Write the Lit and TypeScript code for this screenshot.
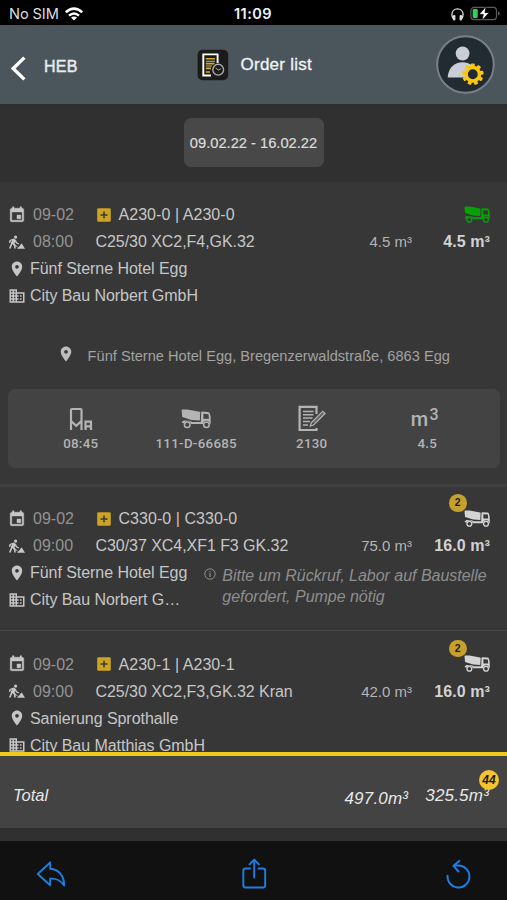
import { LitElement, html, svg, css, nothing } from "lit";
import { customElement, property } from "lit/decorators.js";

interface Order {
  date: string;
  time: string;
  code: string;
  product: string;
  ordered: string;
  delivered: string;
  site: string;
  customer: string;
  badge?: string;
  note?: string;
  active?: boolean;
  kind: string;
}

const ORDERS: Order[] = [
  {
    date: "09-02", time: "08:00", code: "A230-0 | A230-0", product: "C25/30 XC2,F4,GK.32",
    ordered: "4.5 m³", delivered: "4.5 m³", site: "Fünf Sterne Hotel Egg",
    customer: "City Bau Norbert GmbH", active: true, kind: "first",
  },
  {
    date: "09-02", time: "09:00", code: "C330-0 | C330-0", product: "C30/37 XC4,XF1 F3 GK.32",
    ordered: "75.0 m³", delivered: "16.0 m³", site: "Fünf Sterne Hotel Egg",
    customer: "City Bau Norbert G…", badge: "2",
    note: "Bitte um Rückruf, Labor auf Baustelle gefordert, Pumpe nötig", kind: "second",
  },
  {
    date: "09-02", time: "09:00", code: "A230-1 | A230-1", product: "C25/30 XC2,F3,GK.32 Kran",
    ordered: "42.0 m³", delivered: "16.0 m³", site: "Sanierung Sprothalle",
    customer: "City Bau Matthias GmbH", badge: "2", kind: "third",
  },
];

const calendar = html`<svg class="ic" viewBox="0 0 24 24"><path d="M17 12h-5v5h5v-5zM16 1v2H8V1H6v2H5c-1.11 0-1.99.9-1.99 2L3 19c0 1.1.89 2 2 2h14c1.1 0 2-.9 2-2V5c0-1.1-.9-2-2-2h-1V1h-2zm3 18H5V8h14v11z" stroke="currentColor" stroke-width=".6"/></svg>`;
const pin = html`<svg class="ic" viewBox="0 0 24 24"><path d="M12 2C8.130 2 5 5.130 5 9c0 5.250 7 13 7 13s7-7.750 7-13c0-3.870-3.130-7-7-7zm0 9.500c-1.380 0-2.500-1.120-2.500-2.500s1.120-2.500 2.500-2.500 2.500 1.120 2.500 2.500-1.120 2.500-2.500 2.500z"/></svg>`;
const building = html`<svg class="ic" viewBox="0 0 24 24"><path d="M12 7V3H2v18h20V7H12zM6 19H4v-2h2v2zm0-4H4v-2h2v2zm0-4H4V9h2v2zm0-4H4V5h2v2zm4 12H8v-2h2v2zm0-4H8v-2h2v2zm0-4H8V9h2v2zm0-4H8V5h2v2zm10 12h-8v-2h2v-2h-2v-2h2v-2h-2V9h8v10zm-2-8h-2v2h2v-2zm0 4h-2v2h2v-2z"/></svg>`;
const digger = html`<svg class="ic" viewBox="0 0 18 18">
  <circle cx="7.600" cy="4.100" r="1.600"/>
  <path d="M5.600 5.400 8.400 7.200 6.500 10 7.700 12.200V15.600H6.100V12.900L4.400 11 2.700 15.600H1L3.600 8.600 4 7.200 2.700 8.100 2 9.900.8 9.400 1.600 7.100Z"/>
  <path d="M7.900 7.300 9.100 9.600 11 10.300 10.600 11.400 8.300 10.600 7 8.900Z"/>
  <path d="M2.200 8.600 9.600 13.900" fill="none" stroke="currentColor" stroke-width=".9"/>
  <path d="M8.900 15.700 11.600 12.900 12.900 10.900Q13.500 10.200 14.100 11L17 15.700Z"/></svg>`;
const plus = html`<svg class="plus" viewBox="0 0 14 14"><rect x=".2" y=".2" width="13.600" height="13.600" rx="1.400" fill="#cda421"/><path d="M7 3.500v7M3.500 7h7" stroke="#3a3a36" stroke-width="1.500"/></svg>`;
const truckShape = svg`
  <path d="M.6 1.100Q.7.5 1.400.5L6.200.6 18.600 2.700 19.200 3.500 18.800 11.400 10.600 11 1.200 8.100Z"/>
  <path fill-rule="evenodd" d="M20.200 3.200Q20.300 2.600 21 2.600L27 2.900Q28.300 3 28.800 4.300L29.600 7.500 29.800 14.200 29 15.400Q28.500 11.600 25.300 11.800 22.300 12 21.900 15.100H10Q9.600 12 6.400 12 4 12 3.100 14.200L.9 14V12.800L3 11.500 9 11.800 11 13H19.800ZM22.400 4.800V9.700H27.900L27.500 5.200Z"/>
  <circle cx="6.200" cy="15.800" r="2.800" fill="none" stroke="currentColor" stroke-width="1.500"/>
  <circle cx="25.400" cy="15.800" r="2.800" fill="none" stroke="currentColor" stroke-width="1.500"/>`;
const truck = (cls: string) => html`<svg class=${cls} viewBox="0 0 30 20">${truckShape}</svg>`;

@customElement("status-bar")
class StatusBar extends LitElement {
  static styles = css`
    :host { display: grid; grid-template-columns: 1fr auto 1fr; align-items: center; height: 25px;
      box-sizing: border-box; padding: 3px 7px 0 9px; background: #000; color: #dedede;
      font: 14.600px/22px Inter, sans-serif; }
    .carrier { display: flex; align-items: center; gap: 5px; letter-spacing: -.1px; }
    .wifi { width: 20px; height: 14px; color: #fff; margin-top: -1px; }
    .clock { font-weight: 600; font-size: 14.500px; letter-spacing: .5px; color: #f2f2f2; margin-left: -3px; }
    .power { display: flex; justify-content: flex-end; align-items: center; gap: 6px; }
    .phones { width: 13px; height: 13px; }
    .battery { width: 30px; height: 15px; margin-top: -1px; }
  `;
  render() {
    return html`
      <div class="carrier"><span>No SIM</span>
        <svg class="wifi" viewBox="0 0 20 14" fill="none" stroke="currentColor" stroke-width="2.500">
          <path d="M1.800 5.200Q10-2 18.200 5.200M5 8.600Q10 4.300 15 8.600"/><path d="M10 13.400 7 10.600Q10 8.200 13 10.600Z" fill="currentColor" stroke="none"/></svg>
      </div>
      <div class="clock">11:09</div>
      <div class="power">
        <svg class="phones" viewBox="0 0 13 13"><path d="M2.400 10.800Q.8 8.800.9 6.300C1 3 3.400.9 6.500.9S12 3 12.100 6.300Q12.200 8.800 10.600 10.800" fill="none" stroke="#ddd" stroke-width="1.300"/><rect x="2" y="7" width="2.400" height="5.400" rx="1" fill="#ddd"/><rect x="8.600" y="7" width="2.400" height="5.400" rx="1" fill="#ddd"/></svg>
        <svg class="battery" viewBox="0 0 30 15"><rect x=".9" y="1.400" width="25.600" height="12.200" rx="3.300" fill="none" stroke="#5c5c5c" stroke-width="1.200"/><path d="M28 5.400q1.800.5 1.800 2.100T28 9.600Z" fill="#5c5c5c"/><rect x="2.700" y="3" width="5" height="9" rx="1.300" fill="#2fd158"/><path d="M16.400 0 9 8.400h4.300L11.700 15 19.200 6.500h-4.300Z" fill="#fff" stroke="#000" stroke-width=".8"/></svg>
      </div>`;
  }
}

@customElement("app-header")
class AppHeader extends LitElement {
  static styles = css`
    :host { display: grid; grid-template-columns: 197px 1fr auto; align-items: center; height: 79px;
      box-sizing: border-box; padding-right: 12px; background: #4b565c; color: #f1f4f5; }
    .back { display: flex; align-items: center; gap: 17px; padding: 5px 0 0 11px; }
    .chevron { width: 15px; height: 25px; margin-top: 2px; }
    .label { font-size: 16px; letter-spacing: .2px; -webkit-text-stroke: .45px; margin: -1px 0 0 1px; color: #e6edef; }
    .title { display: flex; align-items: center; gap: 11.500px; font-size: 17px; letter-spacing: .25px;
      -webkit-text-stroke: .3px; }
    .app { width: 32px; height: 32px; }
    .avatar { width: 59px; height: 59px; }
  `;
  render() {
    const teeth = [...Array(9).keys()];
    return html`
      <div class="back">
        <svg class="chevron" viewBox="0 0 15 25"><path d="M13.400 1.600 2.200 12.500 13.400 23.400" fill="none" stroke="#fff" stroke-width="3.300"/></svg>
        <span class="label">HEB</span>
      </div>
      <div class="title">
        <svg class="app" viewBox="0 0 32 32"><rect x=".6" y=".7" width="30.600" height="30.600" rx="5" fill="#1b1b1a"/>
          <path d="M20.600 14V5.400H6.300V26.500H14" fill="none" stroke="#fff" stroke-width="1.900"/>
          <path d="M8.800 9.700H18M8.800 14.600H17.500M8.800 19.400H14M8.800 23H13" stroke="#d8ad1c" stroke-width="1.600"/>
          <path d="M8.800 12.200H18M8.800 17H15" stroke="#b9b6aa" stroke-width="1.100"/>
          <circle cx="21.200" cy="20.700" r="5.400" fill="#1b1b1a" stroke="#aaa" stroke-width="1.400"/>
          <path d="M18.600 18.700 21 21.200 23.800 19.800" fill="none" stroke="#aaa" stroke-width="1"/></svg>
        <span>Order list</span>
      </div>
      <svg class="avatar" viewBox="0 0 59 59"><circle cx="29.500" cy="29.500" r="28.300" fill="#212b31" stroke="#768187" stroke-width="2"/>
        <circle cx="26.600" cy="18.500" r="6.900" fill="#c9cdd5"/><path d="M11.700 42.600C12.200 32.500 18.500 27.200 26.600 27.200S39.500 32 40 42.600Z" fill="#c9cdd5"/>
        <g transform="translate(36.800 39.300)" fill="#fbc70e">${teeth.map((i) => svg`<rect x="-1.900" y="-10.800" width="3.800" height="5" rx=".7" transform="rotate(${i * 40})"/>`)}
          <circle r="6.700" fill="#212b31" stroke="#fbc70e" stroke-width="3.500"/></g></svg>`;
  }
}

@customElement("order-item")
class OrderItem extends LitElement {
  @property({ attribute: false }) order!: Order;
  static styles = css`
    :host { display: block; color: #c6c6c6; font-size: 16px; letter-spacing: -.05px; }
    .item { box-sizing: border-box; padding: 19px 17px 0 8px; }
    .first { height: 302px; }
    .second { height: 146px; border-top: 3px solid #414141; padding-top: 18px; }
    .third { height: 147px; border-top: 1px solid #494949; padding-top: 19.500px; }
    .row { display: flex; align-items: center; height: 27px; line-height: 27px; white-space: nowrap; }
    .ic { width: 18px; height: 18px; fill: currentColor; flex: none; }
    .when { width: 62.500px; margin-left: 7px; color: #939393; letter-spacing: 0; }
    .plus { width: 14px; height: 14px; margin: 0 7.500px 0 1.500px; }
    .code { letter-spacing: .05px; }
    .fleet { position: relative; margin-left: auto; height: 18px; width: 26px; }
    .truck { width: 26px; height: 17.500px; fill: currentColor; color: #d4d4d4; display: block; }
    .on { color: #07a007; }
    .badge { position: absolute; left: -15px; top: -15.500px; width: 17.500px; height: 17.500px; border-radius: 50%;
      background: #c5a02d; color: #1e1c14; font: bold 10.500px/17.500px "Liberation Sans", sans-serif; text-align: center; letter-spacing: 0; }
    .ordered { margin-left: auto; font-size: 15px; letter-spacing: 0; color: #b4b4b4; }
    .delivered { width: 78px; text-align: right; font-weight: bold; font-size: 16px; letter-spacing: .1px; color: #d2d2d2; }
    .place { display: flex; }
    .names { flex: none; }
    .name { margin-left: 4px; }
    .note { display: flex; gap: 6px; margin: 6px 0 0 17px; font-style: italic; color: #8e8e8e; line-height: 21px; letter-spacing: -.02px; }
    .info { width: 12px; height: 12px; flex: none; margin-top: 3px; }
    .address { display: flex; align-items: center; justify-content: center; height: 28px; margin: 33px 0 0 9px;
      font-size: 14.600px; letter-spacing: .01px; color: #a2a2a2; gap: 12.500px; white-space: nowrap; }
    .address .ic { margin-bottom: 4px; color: #bdbdbd; }
    .card { display: grid; grid-template-columns: repeat(4, 115.500px); justify-content: center; height: 79.500px; width: 492px;
      margin-top: 18.500px; border-radius: 7px; background: #434343; color: #b4b4b4; box-sizing: border-box; padding-top: 14.500px; }
    .cell { display: flex; flex-direction: column; align-items: center; font: 500 13.300px/20px Roboto, sans-serif; letter-spacing: .3px; }
    .glyph { height: 31px; display: flex; align-items: center; }
    .big { width: 30px; height: 20px; fill: currentColor; }
    .mixer { width: 24px; height: 24px; }
    .sheet { width: 28px; height: 27px; }
    .unit { font: 500 20px/24px Roboto, sans-serif; letter-spacing: .2px; margin-left: -5px; }
    .unit sup { font-size: 16px; line-height: 0; vertical-align: 6px; margin-left: 1px; }
  `;
  private details() {
    return html`
      <div class="address">${pin}<span>Fünf Sterne Hotel Egg, Bregenzerwaldstraße, 6863 Egg</span></div>
      <div class="card">
        <div class="cell"><div class="glyph"><svg class="mixer" viewBox="0 0 24 24" fill="none" stroke="currentColor" stroke-width="2.200"><path d="M2 23V3Q2 2 3 2H11.500Q12.500 2 12.500 3V23M2 14 7.200 18.800 12.500 14M16.500 23V14.700H22V23M16.500 19.300H22"/></svg></div>08:45</div>
        <div class="cell"><div class="glyph">${truck("big")}</div>111-D-66685</div>
        <div class="cell"><div class="glyph"><svg class="sheet" viewBox="0 0 28 27" fill="none" stroke="currentColor"><path d="M18.500 9V1.800H1.600V25H18.500V23" stroke-width="2.200"/><path d="M5 6.500H15.500M5 9.700H15.500M5 13H14.500M5 16.500H12M5 20H10" stroke-width="1.500"/><path d="M13.300 17.800 24.800 6.300 27 8.500 15.500 20 12.300 21Z" stroke-width="1.300"/><path d="M15.500 18 25.500 8" stroke-width=".6"/></svg></div>2130</div>
        <div class="cell"><div class="glyph unit"><span>m<sup>3</sup></span></div>4.5</div>
      </div>`;
  }
  render() {
    const o = this.order;
    return html`<div class="item ${o.kind}">
      <div class="row">${calendar}<span class="when">${o.date}</span>${plus}<span class="code">${o.code}</span>
        <div class="fleet">${truck(o.active ? "truck on" : "truck")}${o.badge ? html`<span class="badge">${o.badge}</span>` : nothing}</div></div>
      <div class="row">${digger}<span class="when">${o.time}</span><span>${o.product}</span>
        <span class="ordered">${o.ordered}</span><span class="delivered">${o.delivered}</span></div>
      <div class="place">
        <div class="names">
          <div class="row">${pin}<span class="name">${o.site}</span></div>
          <div class="row">${building}<span class="name">${o.customer}</span></div>
        </div>
        ${o.note ? html`<div class="note"><svg class="info" viewBox="0 0 12 12" fill="none" stroke="currentColor"><circle cx="6" cy="6" r="5.200" stroke-width="1"/><path d="M6 5.300V9M6 3V4.300" stroke-width="1.200"/></svg><span>${o.note}</span></div>` : nothing}
      </div>
      ${o.active ? this.details() : nothing}
    </div>`;
  }
}

@customElement("app-root")
class AppRoot extends LitElement {
  static styles = css`
    :host { display: flex; flex-direction: column; height: 900px; overflow: hidden; background: #303030;
      font-family: "Liberation Sans", Arial, sans-serif; }
    .range { display: flex; justify-content: center; height: 78px; box-sizing: border-box; padding-top: 14px; border-top: 1px solid #2b2f31; }
    .dates { width: 140px; height: 49px; margin-top: -1px; border-radius: 7px; background: #484848; color: #dcdcdc; text-align: center;
      font-size: 14.700px; line-height: 50px; -webkit-text-stroke: .2px; }
    .list { flex: 1; min-height: 0; overflow: hidden; background: #373737; }
    .total { display: flex; align-items: center; height: 76px; box-sizing: border-box; border-top: 4px solid #f0c91b;
      padding: 0 18px 0 13px; margin-bottom: 13px; background: #434343; color: #e8e8e8; font-style: italic; font-size: 16.500px; }
    .label { flex: 1; padding-top: 7px; }
    .sum { position: relative; font-size: 17px; letter-spacing: .2px; margin-left: 17px; padding-top: 8px; }
    .all { padding-top: 13px; }
    .count { position: absolute; right: -10px; top: -8.500px; width: 20px; height: 20px; border-radius: 50%; background: #f3c331;
      color: #1c180a; font: italic bold 12px/20px "Liberation Sans", sans-serif; text-align: center; letter-spacing: 0; }
    .tools { display: flex; justify-content: space-between; align-items: center; height: 59px; box-sizing: border-box;
      padding: 7px 35px 0 36px; background: #111; color: #1f7fe0; }
    .tool { width: 30px; height: 32px; fill: none; stroke: currentColor; stroke-width: 1.900; stroke-linejoin: round; stroke-linecap: round; }
  `;
  render() {
    return html`
      <status-bar></status-bar>
      <app-header></app-header>
      <div class="range"><div class="dates">09.02.22 - 16.02.22</div></div>
      <div class="list">${ORDERS.map((o) => html`<order-item .order=${o}></order-item>`)}</div>
      <div class="total"><span class="label">Total</span><span class="sum all">497.0m³</span>
        <span class="sum">325.5m³<span class="count">44</span></span></div>
      <div class="tools">
        <svg class="tool" viewBox="0 0 30 32"><path d="M14.200 4.500 1.800 16 14.200 27.200V20.700C21 20.300 24.500 22.300 28.200 27.500 28.200 17.500 22.500 11.200 14.200 10.700Z"/></svg>
        <svg class="tool" viewBox="0 0 30 32"><path d="M11 10.500H6.500Q4.300 10.500 4.300 12.700V27.300Q4.300 29.500 6.500 29.500H24Q26.200 29.500 26.200 27.300V12.700Q26.200 10.500 24 10.500H19.500M15.200 19.500V1.800M10.500 6.300 15.200 1.600 19.900 6.300"/></svg>
        <svg class="tool" viewBox="0 0 30 32"><path d="M5.500 17.800A11 11 0 1 0 16.500 7.500H11.500M17.500 2.800 11.500 7.800 16.500 13.500"/></svg>
      </div>`;
  }
}
